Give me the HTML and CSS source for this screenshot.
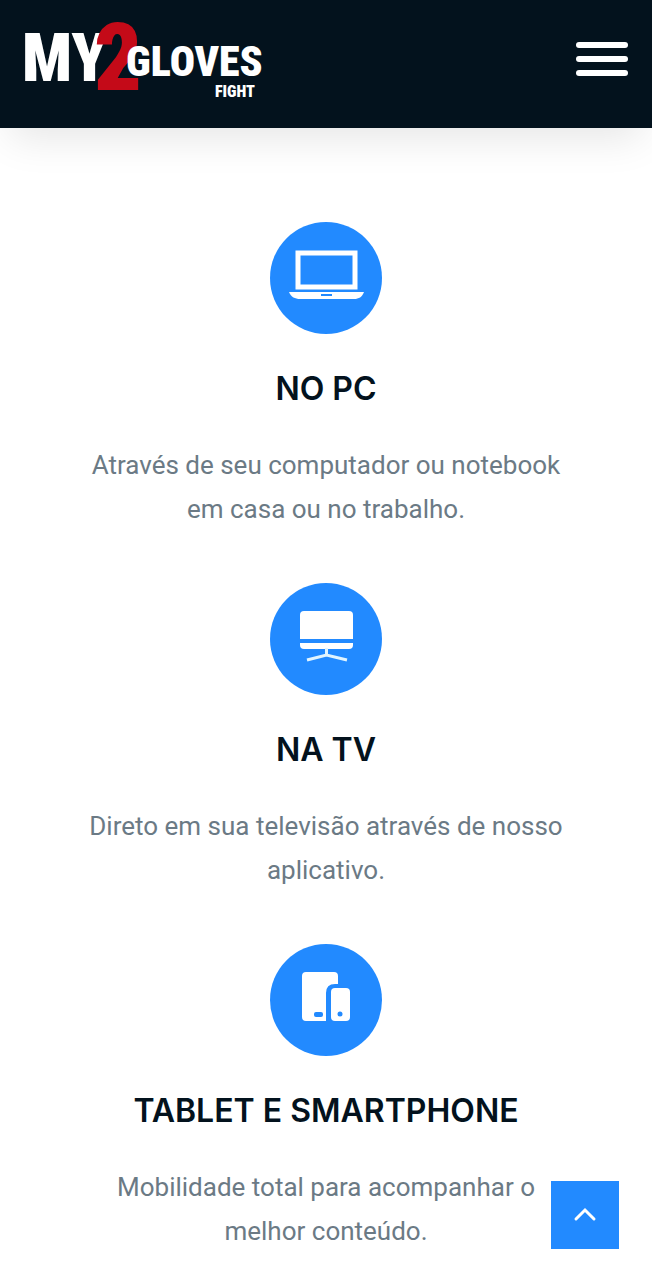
FILE: index.html
```html
<!DOCTYPE html>
<html lang="pt-br">

<head>
	<meta charset="UTF-8">
	<meta name="viewport" content="width=device-width, initial-scale=1">
	<title>My2Gloves Fight</title>
	<link rel="stylesheet" href="styles.css">
</head>

<body>

	<header class="header">
		<a href="#" class="logo" aria-label="My2Gloves Fight">
			<svg width="244" height="84" viewBox="0 0 244 84">
				<text class="logo-my" x="-2" y="65">MY</text>
				<text class="logo-two" x="70" y="74">2</text>
				<text class="logo-gloves" x="102" y="60">GLOVES</text>
				<text class="logo-fight" x="191" y="81">FIGHT</text>
			</svg>
		</a>
		<button type="button" class="menu-btn" aria-label="Menu">
			<span class="bar"></span>
			<span class="bar"></span>
			<span class="bar"></span>
		</button>
	</header>

	<main class="features">

		<section class="feature">
			<div class="circle">
				<!-- notebook -->
				<svg width="112" height="112" viewBox="0 0 112 112">
					<rect x="28" y="31" width="57" height="34" fill="none" stroke="#fff" stroke-width="5"/>
					<path fill="#fff" d="M19 70h75c-2 5-5 7-10 7H30c-5 0-9-2-11-7z"/>
					<rect x="51" y="72" width="11" height="2" fill="#228aff"/>
				</svg>
			</div>
			<h2 class="title">NO PC</h2>
			<p class="text">Através de seu computador ou notebook em casa ou no trabalho.</p>
		</section>

		<section class="feature">
			<div class="circle">
				<!-- tv -->
				<svg width="112" height="112" viewBox="0 0 112 112">
					<path fill="#fff" d="M30 56V32q0-4 4-4h45q4 0 4 4v24z"/>
					<path fill="#fff" d="M30 60h53v2q0 4-4 4H34q-4 0-4-4z"/>
					<path fill="none" stroke="#e2f5ff" stroke-width="3" d="M56.500 65v7M37 77l19.500-5L77 77"/>
				</svg>
			</div>
			<h2 class="title">NA TV</h2>
			<p class="text">Direto em sua televisão através de nosso aplicativo.</p>
		</section>

		<section class="feature">
			<div class="circle">
				<!-- tablet + celular -->
				<svg width="112" height="112" viewBox="0 0 112 112">
					<path fill="#fff" d="M36 28h28q4 0 4 4v8h-3q-9 0-9 9v28H36q-4 0-4-4V32q0-4 4-4z"/>
					<rect x="61" y="44" width="19" height="33" rx="4" fill="#fff"/>
					<rect x="44" y="68" width="9" height="5" rx="2" fill="#228aff"/>
					<circle cx="70" cy="70" r="2.500" fill="#228aff"/>
				</svg>
			</div>
			<h2 class="title">TABLET E SMARTPHONE</h2>
			<p class="text">Mobilidade total para acompanhar o melhor conteúdo.</p>
		</section>

	</main>

	<a href="#" class="to-top" aria-label="Voltar ao topo">
		<svg width="24" height="24" viewBox="0 0 24 24">
			<path fill="none" stroke="#fff" stroke-width="3" stroke-linecap="round" d="M3 16l9-9 9 9"/>
		</svg>
	</a>

</body>

</html>
```

FILE: styles.css
```css
* { box-sizing: border-box; }

body {
	margin: 0;
	background-color: #fff;
	color: #03121d;
	font-family: Roboto, "Liberation Sans", sans-serif;
}

/* topo */
.header {
	display: flex;
	justify-content: space-between;
	align-items: flex-start;
	height: 128px;
	padding: 16px 24px;
	background-color: #03121d;
	box-shadow: 0 20px 40px -10px rgba(0, 0, 0, 0.1);
}

.logo svg {
	display: block;
	overflow: visible;
}

.logo text {
	font-family: "Liberation Sans Narrow", "Roboto Condensed", "Liberation Sans", sans-serif;
	font-weight: 900;
	fill: #fff;
}

.logo .logo-my { font-size: 66px; }
.logo .logo-two { font-size: 94px; fill: #c40a18; }
.logo .logo-gloves { font-size: 42px; }
.logo .logo-fight { font-size: 16px; }

.menu-btn {
	display: flex;
	flex-direction: column;
	gap: 8px;
	width: 52px;
	margin-top: 26px;
	padding: 0;
	border: 0;
	background: none;
	cursor: pointer;
}

.bar {
	width: 100%;
	height: 6px;
	border-radius: 3px;
	background-color: #fff;
}

/* blocos */
.features {
	display: flex;
	flex-direction: column;
	gap: 52px;
	padding: 94px 80px 24px;
}

.feature { text-align: center; }

.circle {
	width: 112px;
	height: 112px;
	margin: 0 auto 35px;
	border-radius: 50%;
	background-color: #228aff;
}

.circle svg { display: block; }

.title {
	margin: 0 0 34px;
	font-family: Inter, "Liberation Sans", sans-serif;
	font-size: 32px;
	font-weight: 600;
	line-height: 40px;
}

.text {
	margin: 0;
	color: #6b7a85;
	font-size: 26px;
	line-height: 44px;
}

/* voltar ao topo */
.to-top {
	position: fixed;
	right: 33px;
	bottom: 31px;
	display: flex;
	justify-content: center;
	align-items: center;
	width: 68px;
	height: 68px;
	background-color: #228aff;
}
```
